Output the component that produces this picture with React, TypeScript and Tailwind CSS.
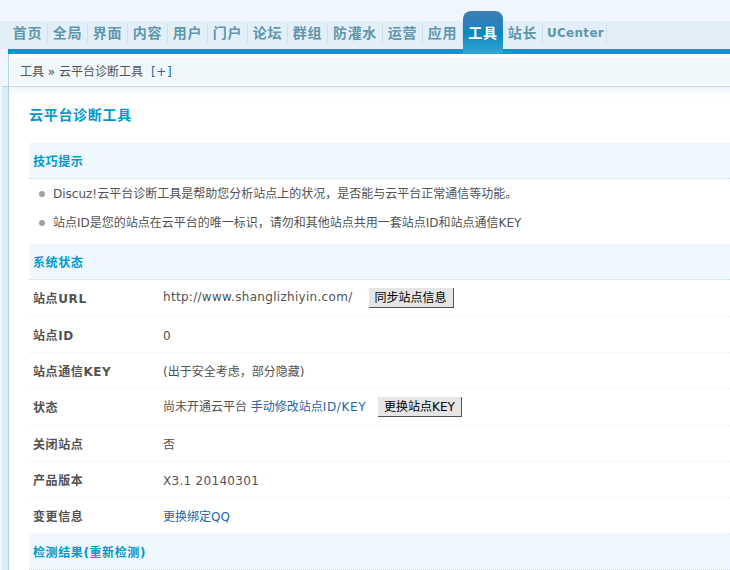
const font = { fontFamily: '"DejaVu Sans", "Noto Sans CJK SC", sans-serif' };

const navItems = ['首页', '全局', '界面', '内容', '用户', '门户', '论坛', '群组', '防灌水', '运营', '应用'];

function SectionHead({ children }: { children: React.ReactNode }) {
  return (
    <div className="flex h-9 items-center border-b border-dotted border-sky-200 bg-gradient-to-b from-blue-50 to-sky-50 pt-0.5 pl-1 text-xs font-bold tracking-wider text-[#0099cc]">
      {children}
    </div>
  );
}

function Row({ label, children }: { label: string; children: React.ReactNode }) {
  return (
    <div className="flex min-h-9 items-center border-b border-dotted border-sky-100 py-2 pl-1 text-xs">
      <div className="w-32 pt-0.5 font-bold tracking-wider text-neutral-600">{label}</div>
      <div className="flex items-center gap-3 pt-0.5 pl-0.5 text-neutral-600 has-[button]:pt-0">{children}</div>
    </div>
  );
}

function OldButton({ children }: { children: React.ReactNode }) {
  return (
    <button className="h-5 border-r border-b border-neutral-600 bg-neutral-200 px-1.5 text-xs text-black">
      {children}
    </button>
  );
}

export default function App() {
  return (
    <div className="flex h-screen w-full flex-col overflow-hidden bg-white" style={font}>
      <div className="h-[21px] shrink-0 bg-blue-50" />
      <div className="flex h-7 shrink-0 items-start bg-[#e2eff9] pt-0.5 pl-2">
        {navItems.map((item) => (
          <a
            key={item}
            className={`h-5 border-r border-[#cfe0ea] text-center text-sm leading-5 font-bold tracking-wider text-[#5f96ab] ${
              item === '防灌水' ? 'w-[55px]' : 'w-10'
            }`}
          >
            {item}
          </a>
        ))}
        <a className="relative z-10 -mt-3 h-[43px] w-10 rounded-t-lg bg-gradient-to-b from-[#3d7db5] via-[#0b85c0] to-[#30a8cf] pt-3 text-center text-sm leading-5 font-bold tracking-wider text-white">
          工具
        </a>
        <a className="h-5 w-10 border-r border-[#cfe0ea] text-center text-sm leading-5 font-bold tracking-wider text-[#5f96ab]">
          站长
        </a>
        <a className="h-5 w-16 border-r border-[#cfe0ea] pl-0.5 text-center text-xs leading-5 font-bold tracking-wide text-[#5f96ab]">
          UCenter
        </a>
      </div>

      <div className="flex min-h-0 flex-1">
        <div className="flex w-2 shrink-0 flex-col border-l-2 border-blue-50 bg-[#dcedf8]">
          <div className="h-[38px] border-b border-[#b9d5e3] bg-blue-50" />
        </div>
        <div className="min-w-0 flex-1">
          <div className="h-[5px] bg-[#0099cc]" />
          <div className="border-l border-[#b9d5e3]">
            <div className="border-b border-[#b9d5e3] pt-1 pb-0.5 pl-px">
              <div className="flex h-6.5 items-center bg-[#f0f8fc] pt-0.5 pl-2.5 text-xs text-neutral-600">
                工具 » 云平台诊断工具
                <span className="ml-2 tracking-wider text-[#2366a8]">[+]</span>
              </div>
            </div>
            <div className="h-2.5 bg-gradient-to-b from-blue-50 to-white" />

            <div className="pl-5">
              <h1 className="pt-2 pb-4.5 text-sm leading-5 font-bold tracking-wider text-[#0099cc]">云平台诊断工具</h1>
              <SectionHead>技巧提示</SectionHead>
              <ul className="list-none pt-px pb-2 pl-2.5 text-xs text-neutral-600">
                <li className="flex h-7 items-center gap-2">
                  <span className="size-1.5 rounded-full bg-neutral-400" />
                  Discuz!云平台诊断工具是帮助您分析站点上的状况，是否能与云平台正常通信等功能。
                </li>
                <li className="flex h-7 items-center gap-2 pt-0.5">
                  <span className="size-1.5 rounded-full bg-neutral-400" />
                  站点ID是您的站点在云平台的唯一标识，请勿和其他站点共用一套站点ID和站点通信KEY
                </li>
              </ul>
              <SectionHead>系统状态</SectionHead>
              <Row label="站点URL">
                <span className="pr-1 pb-0.5 tracking-wide">http://www.shanglizhiyin.com/</span>
                <OldButton>同步站点信息</OldButton>
              </Row>
              <Row label="站点ID">0</Row>
              <Row label="站点通信KEY">(出于安全考虑，部分隐藏)</Row>
              <Row label="状态">
                <span>
                  尚未开通云平台{' '}
                  <a className="text-[#2366a8]">
                    手动修改站点<span className="tracking-wider">ID/KEY</span>
                  </a>
                </span>
                <OldButton>更换站点KEY</OldButton>
              </Row>
              <Row label="关闭站点">否</Row>
              <Row label="产品版本">
                <span className="tracking-wide">X3.1 20140301</span>
              </Row>
              <Row label="变更信息">
                <a className="text-[#2366a8]">更换绑定QQ</a>
              </Row>
              <SectionHead>检测结果(重新检测)</SectionHead>
            </div>
          </div>
        </div>
      </div>
    </div>
  );
}
